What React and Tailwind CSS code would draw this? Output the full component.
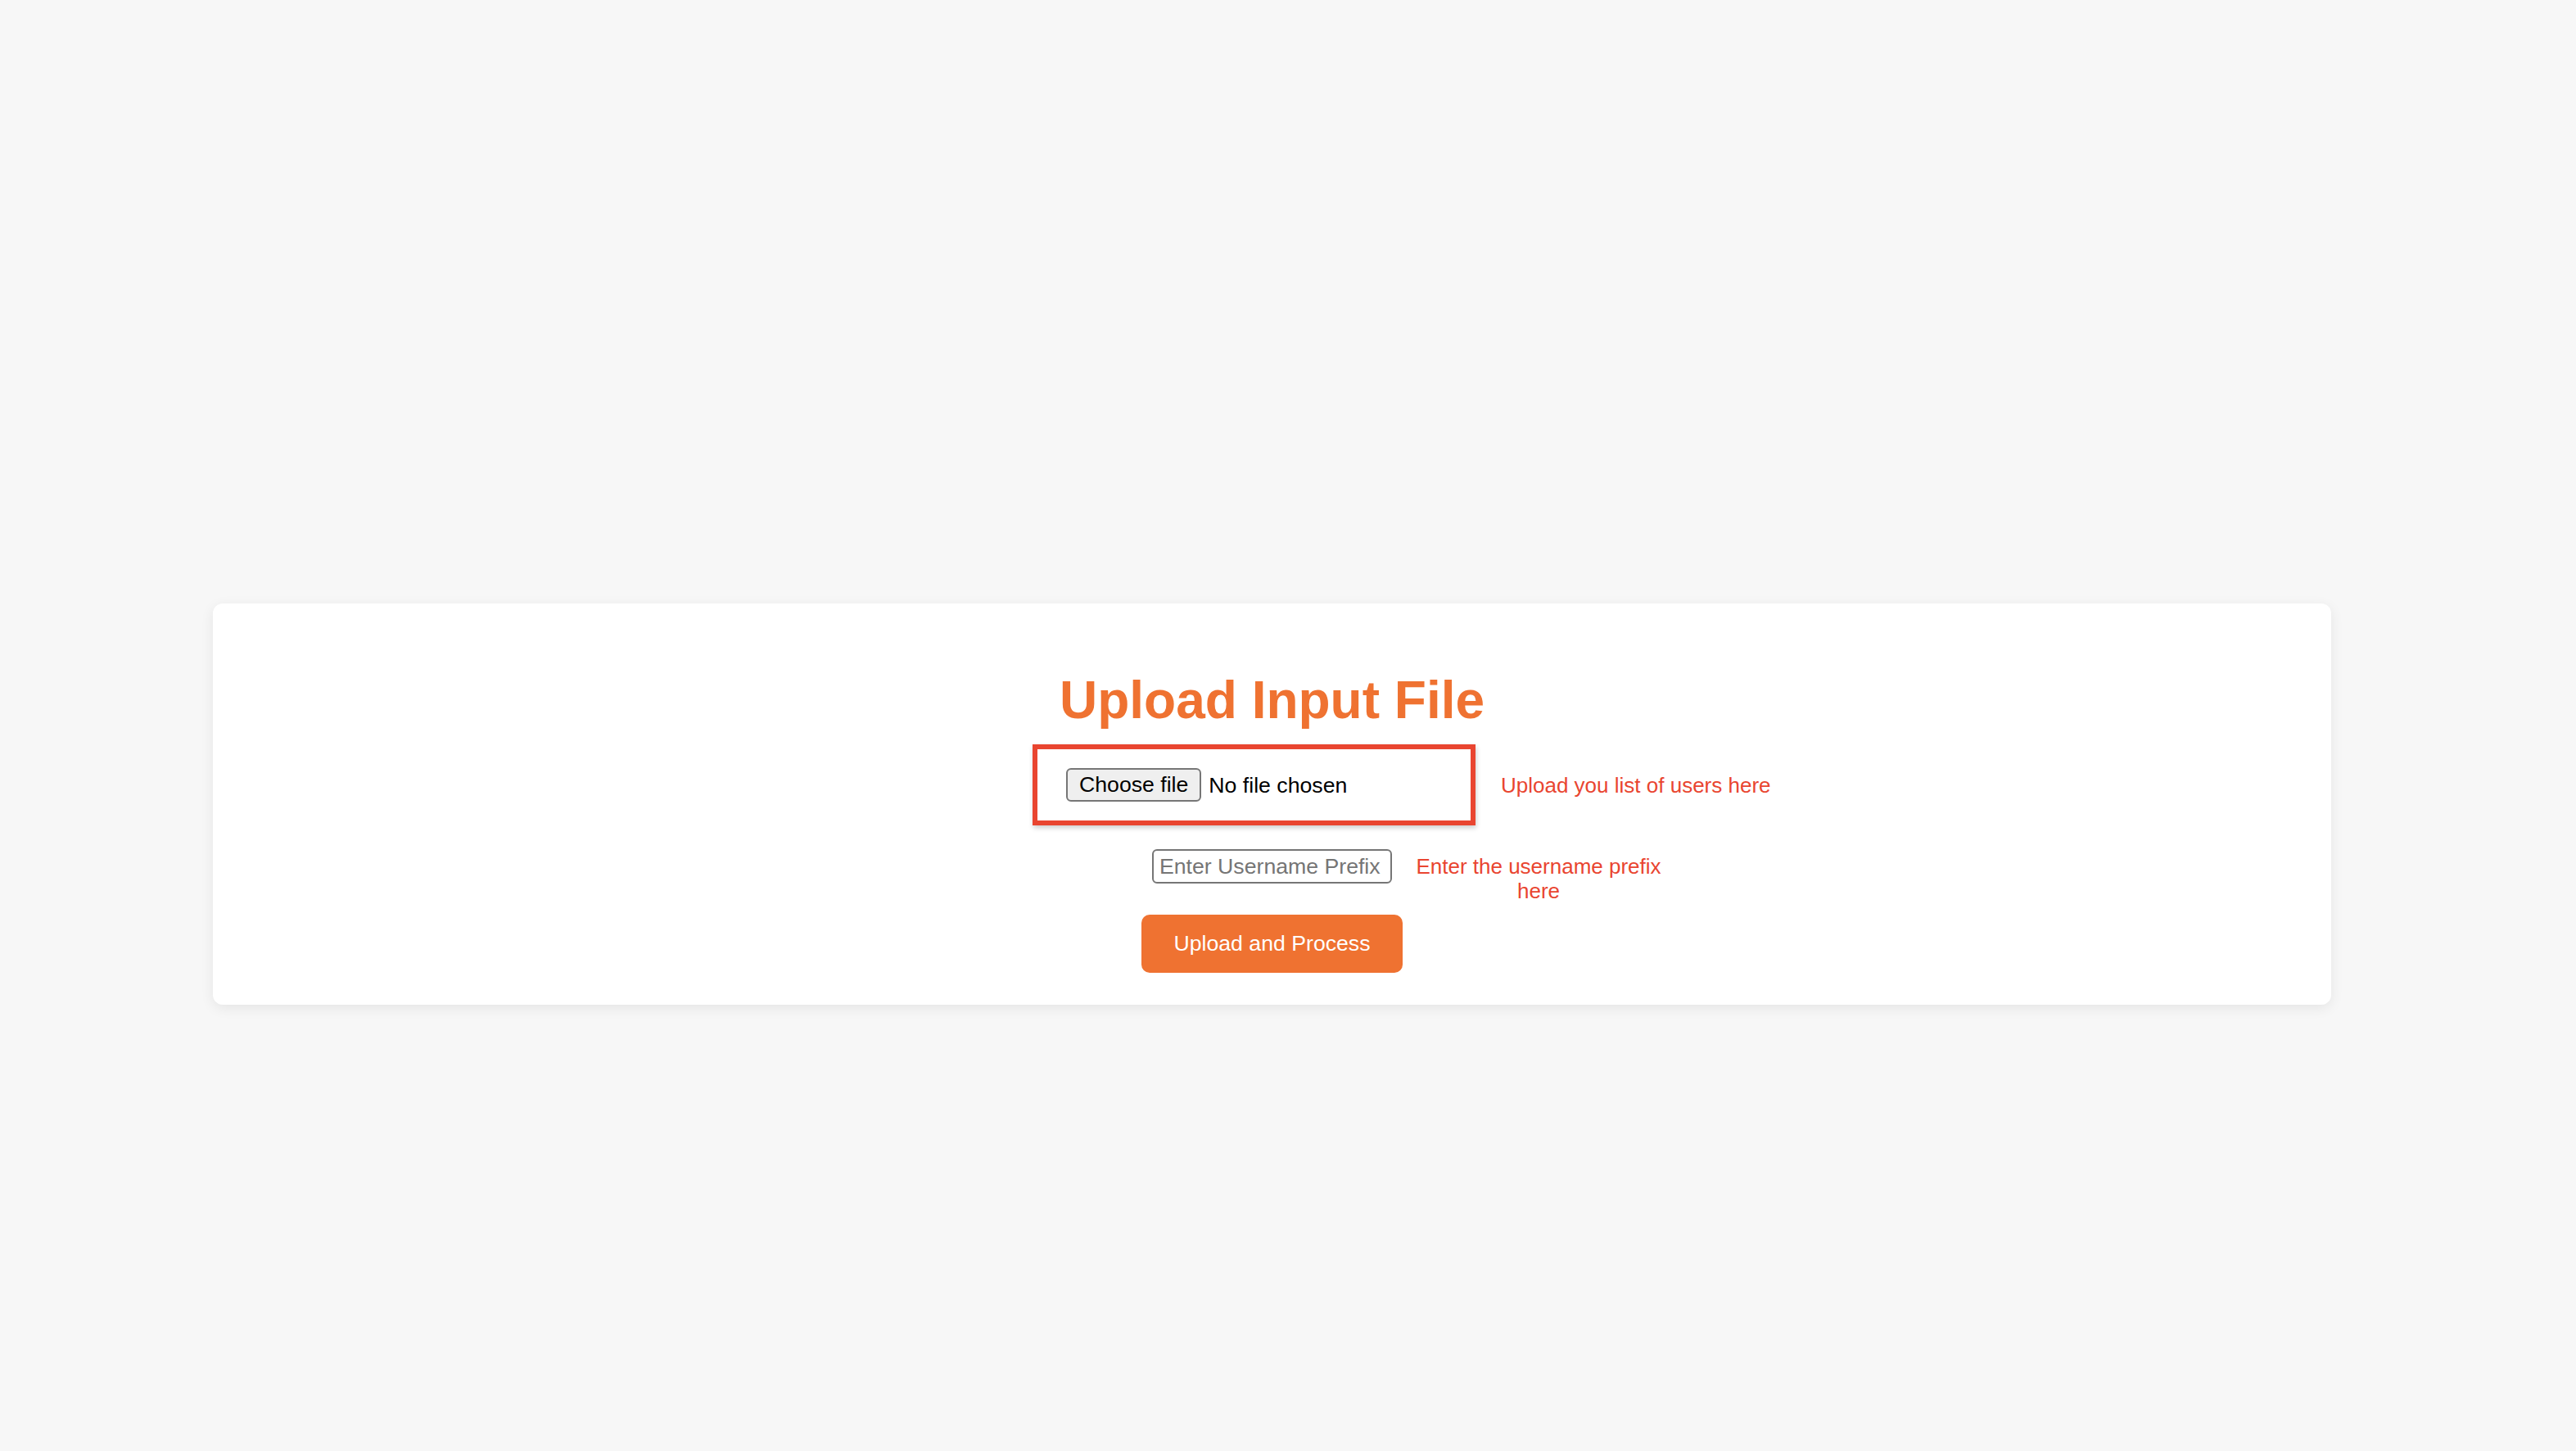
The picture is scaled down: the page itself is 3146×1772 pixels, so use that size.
import { useState } from 'react';

const App = () => {
  const [prefix, setPrefix] = useState('');
  const [file, setFile] = useState(null);

  return (
    <div className="min-h-screen bg-[#f7f7f7] pt-[737px] font-['Liberation_Sans',Arial,sans-serif] text-black">
      <div className="ml-[260px] w-[2587px] bg-white rounded-[12px] shadow-[0_4px_16px_rgba(0,0,0,0.08)] pt-[81px] pb-[39px]">
        <h2 className="text-center text-[64px] leading-[74px] font-bold text-[#ef7231]">Upload Input File</h2>

        <div className="grid grid-cols-[1fr_auto_1fr] gap-x-[31px] items-center mt-[17px]">
          <div />
          <div className="-ml-[44px] w-[541px] border-[6px] border-[#e94530] pt-[23px] pb-[23px] px-[35px] shadow-[1px_3px_6px_rgba(0,0,0,0.2)]">
            <label className="flex items-center cursor-pointer">
              <input type="file" className="hidden" onChange={(e) => setFile(e.target.files[0])} />
              <span className="h-[41px] px-[14px] border-2 border-[#767676] rounded-[6px] bg-[#efefef] text-[26.67px] leading-[37px]">
                Choose file
              </span>
              <span className="ml-[9px] text-[26.67px]">{file ? file.name : 'No file chosen'}</span>
            </label>
          </div>
          <p className="text-[26px] leading-[30px] text-[#e94530]">Upload you list of users here</p>
        </div>

        <div className="grid grid-cols-[1fr_auto_1fr] gap-x-[29px] items-baseline mt-[29px]">
          <div />
          <input
            type="text"
            value={prefix}
            onChange={(e) => setPrefix(e.target.value)}
            placeholder="Enter Username Prefix"
            className="w-[293px] h-[42px] border-2 border-[#767676] rounded-[6px] px-[7px] text-[26.67px] placeholder:text-[#757575] outline-none"
          />
          <p className="w-[300px] text-center text-[26px] leading-[30px] text-[#e94530]">Enter the username prefix here</p>
        </div>

        <div className="flex justify-center mt-[14px]">
          <button type="button" className="w-[319px] h-[71px] rounded-[10px] bg-[#ef7231] text-white text-[26.67px]">
            Upload and Process
          </button>
        </div>
      </div>
    </div>
  );
};

export default App;
